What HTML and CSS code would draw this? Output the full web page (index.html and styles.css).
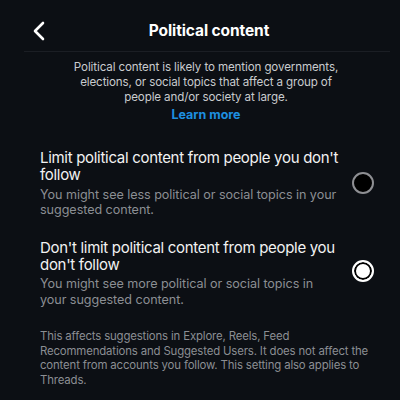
FILE: index.html
```html
<!DOCTYPE html>
<html>
<head>
<meta charset="utf-8">
<link rel="stylesheet" href="styles.css">
</head>
<body>
<div class="screen">
  <header class="header">
    <svg class="back" width="14" height="20" viewBox="0 0 14 20"><path d="M11 2 L3 10 L11 18" fill="none" stroke="#fff" stroke-width="2.6" stroke-linecap="round" stroke-linejoin="round"/></svg>
    <h1 class="title">Political content</h1>
  </header>
  <section class="intro">
    <p class="desc">Political content is likely to mention governments, elections, or social topics that affect a group of people and/or society at large.</p>
    <a class="learn">Learn more</a>
  </section>
  <div class="options">
    <div class="option">
      <div class="text">
        <div class="opt-title">Limit political content from people you don't follow</div>
        <div class="opt-sub">You might see less political or social topics in your suggested content.</div>
      </div>
      <span class="radio"></span>
    </div>
    <div class="option">
      <div class="text">
        <div class="opt-title">Don't limit political content from people you don't follow</div>
        <div class="opt-sub">You might see more political or social topics in your suggested content.</div>
      </div>
      <span class="radio checked"></span>
    </div>
  </div>
  <p class="footer">This affects suggestions in Explore, Reels, Feed Recommendations and Suggested Users. It does not affect the content from accounts you follow. This setting also applies to Threads.</p>
</div>
</body>
</html>
```

FILE: styles.css
```css
html, body {
  margin: 0;
  padding: 0;
  background: #0c0f14;
}
body {
  width: 400px;
  height: 400px;
  overflow: hidden;
  font-family: Inter, "Noto Sans", sans-serif;
  color: #fff;
}
.screen {
  display: flex;
  flex-direction: column;
}
.header {
  height: 51px;
  margin: 0 10px 0 24px;
  border-bottom: 1px solid #1b1e24;
  display: flex;
  align-items: center;
  justify-content: center;
  position: relative;
}
.back {
  position: absolute;
  left: 8px;
  top: 21px;
}
.title {
  margin: 9px 0 0 4px;
  font-size: 15.5px;
  font-weight: 700;
  letter-spacing: -0.1px;
}
.intro {
  display: flex;
  flex-direction: column;
  align-items: center;
  padding: 8px 0 0 12px;
}
.desc {
  margin: 0;
  width: 270px;
  text-align: center;
  font-size: 11.6px;
  line-height: 15px;
  letter-spacing: -0.12px;
  color: #c9cbce;
}
.learn {
  margin-top: 2px;
  font-size: 12.5px;
  line-height: 16px;
  font-weight: 700;
  color: #1d8fe0;
}
.options {
  display: flex;
  flex-direction: column;
  gap: 21px;
  padding: 26px 26px 0 40px;
}
.option {
  display: flex;
  align-items: center;
  justify-content: space-between;
}
.text {
  width: 303px;
}
.opt-title {
  font-size: 15px;
  line-height: 17px;
  letter-spacing: -0.3px;
  color: #f2f2f2;
}
.opt-sub {
  width: 299px;
  margin-top: 3.5px;
  font-size: 12.6px;
  line-height: 15.5px;
  letter-spacing: -0.05px;
  color: #8b8e93;
}
.radio {
  width: 18px;
  height: 18px;
  border-radius: 50%;
  border: 2px solid #8e8f93;
  background: #000;
  margin-top: -1px;
}
.radio.checked {
  border-color: #fff;
  background: #fff;
  box-shadow: inset 0 0 0 2px #000;
  margin-top: -3px;
}
.footer {
  margin: 22px 24px 0 40px;
  font-size: 11.4px;
  line-height: 14.7px;
  letter-spacing: -0.15px;
  color: #8b8e93;
}
```
